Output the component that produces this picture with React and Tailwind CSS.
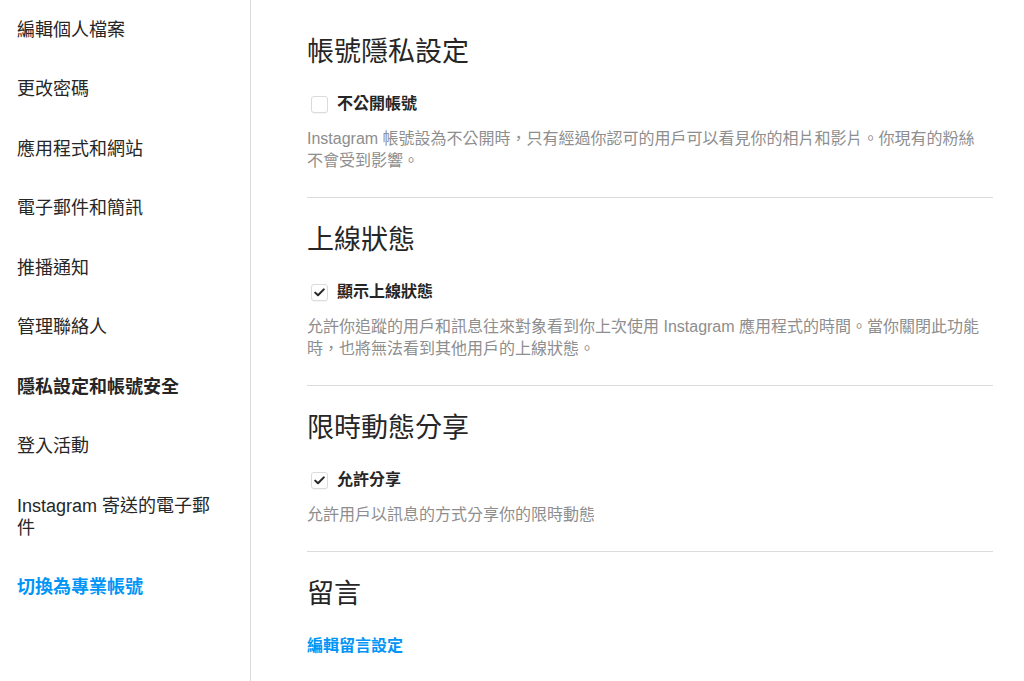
import React from "react";

const font = "font-['Liberation_Sans','Noto_Sans_CJK_TC',sans-serif]";

const navItems = [
  { label: "編輯個人檔案" },
  { label: "更改密碼" },
  { label: "應用程式和網站" },
  { label: "電子郵件和簡訊" },
  { label: "推播通知" },
  { label: "管理聯絡人" },
  { label: "隱私設定和帳號安全", active: true },
  { label: "登入活動" },
  { label: "Instagram 寄送的電子郵件" },
  { label: "切換為專業帳號", blue: true },
];

function Checkbox({ checked }) {
  return (
    <span className="ml-[4px] flex h-[17px] w-[17px] items-center justify-center rounded-[3px] border border-[#dbdbdb] bg-white shadow-[0_1px_1px_rgba(0,0,0,0.04)]">
      {checked && (
        <svg width="11" height="9" viewBox="0 0 11 9" fill="none">
          <path d="M1.2 4.6 L4 7.3 L9.8 1.4" stroke="#262626" strokeWidth="2" strokeLinecap="round" strokeLinejoin="round" />
        </svg>
      )}
    </span>
  );
}

function Section({ title, label, checked, desc }) {
  return (
    <div>
      <h2 className="text-[27px] leading-[32px] font-normal text-[#262626]">{title}</h2>
      <div className="mt-[24px] flex h-[24px] items-center gap-[9px]">
        <Checkbox checked={checked} />
        <span className="text-[16px] font-bold text-[#262626]">{label}</span>
      </div>
      <p className="mt-[12px] pr-[8px] text-[16px] leading-[22px] text-[#8e8e8e]">{desc}</p>
      <div className="mt-[25px] h-px bg-[#dbdbdb]" />
    </div>
  );
}

export default function App() {
  return (
    <div className={`flex h-[681px] w-[1024px] overflow-hidden bg-white ${font}`}>
      <aside className="w-[251px] shrink-0 border-r border-[#dbdbdb]">
        <ul>
          {navItems.map((it) => (
            <li
              key={it.label}
              className={`pl-[17px] pr-[30px] py-[18.75px] text-[18px] leading-[22px] ${
                it.blue
                  ? "font-bold text-[#0095f6]"
                  : it.active
                  ? "font-bold text-[#262626]"
                  : "text-[#262626]"
              }`}
            >
              {it.label}
            </li>
          ))}
        </ul>
      </aside>
      <main className="flex-1 pl-[56px] pr-[31px] pt-[36px]">
        <div className="flex flex-col gap-[26px]">
          <Section
            title="帳號隱私設定"
            label="不公開帳號"
            checked={false}
            desc="Instagram 帳號設為不公開時，只有經過你認可的用戶可以看見你的相片和影片。你現有的粉絲不會受到影響。"
          />
          <Section
            title="上線狀態"
            label="顯示上線狀態"
            checked={true}
            desc="允許你追蹤的用戶和訊息往來對象看到你上次使用 Instagram 應用程式的時間。當你關閉此功能時，也將無法看到其他用戶的上線狀態。"
          />
          <Section
            title="限時動態分享"
            label="允許分享"
            checked={true}
            desc="允許用戶以訊息的方式分享你的限時動態"
          />
          <div>
            <h2 className="text-[27px] leading-[32px] font-normal text-[#262626]">留言</h2>
            <a className="mt-[25px] block text-[16px] leading-[22px] font-bold text-[#0095f6]">編輯留言設定</a>
          </div>
        </div>
      </main>
    </div>
  );
}
